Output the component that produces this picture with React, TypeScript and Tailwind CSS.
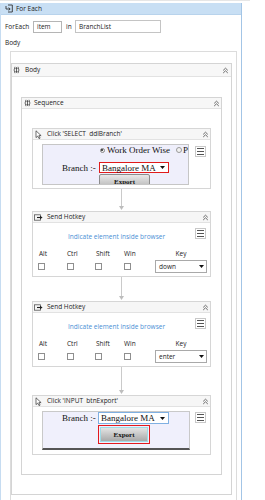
import React from "react";

const F = "font-['Open_Sans',sans-serif]";
const S = "font-['Liberation_Serif',serif]";

function Chev() {
  return (
    <svg width="7" height="7" viewBox="0 0 7 7" fill="none" stroke="#5a5a5a" strokeWidth="0.9">
      <path d="M1.2 3.4 L3.5 1.2 L5.8 3.4 M1.2 6 L3.5 3.8 L5.8 6" />
    </svg>
  );
}

function SeqIcon() {
  return (
    <svg width="7" height="8" viewBox="0 0 7 8" fill="none" stroke="#444" strokeWidth="0.8">
      <path d="M2 0.8 Q0.2 4 2 7.2" />
      <path d="M5 0.8 Q6.8 4 5 7.2" />
      <path d="M3.5 1.5 V6.5" />
      <path d="M2.5 2.6 L3.5 1.4 L4.5 2.6 Z M2.5 5.4 L3.5 6.6 L4.5 5.4 Z" fill="#444" strokeWidth="0.4" />
    </svg>
  );
}

function ForEachIcon() {
  return (
    <svg width="8" height="9" viewBox="0 0 8 9" fill="none" stroke="#333" strokeWidth="0.9">
      <path d="M3 1 H7.3 V8 H3" />
      <path d="M1 2 V5 H5" />
      <path d="M3.6 3.6 L5.2 5 L3.6 6.4" />
    </svg>
  );
}

function CursorIcon() {
  return (
    <svg width="7" height="9" viewBox="0 0 7 9">
      <path d="M1 0.8 L1 7.6 L2.7 6.1 L4 8.6 L5.1 8.1 L3.9 5.6 L6.1 5.6 Z" fill="#fff" stroke="#333" strokeWidth="0.7" strokeLinejoin="round" />
    </svg>
  );
}

function HotkeyIcon() {
  return (
    <svg width="9" height="7" viewBox="0 0 9 7" fill="none">
      <rect x="0.5" y="0.8" width="6" height="5.4" stroke="#555" strokeWidth="0.8" />
      <path d="M3 3.5 H6.5" stroke="#222" strokeWidth="1.1" />
      <path d="M6 1.8 L8.6 3.5 L6 5.2 Z" fill="#222" />
    </svg>
  );
}

function Hamburger() {
  return (
    <div className="w-[11px] h-[11px] border border-[#c8c8c8] bg-white flex flex-col items-center justify-center gap-[2px]">
      <div className="w-[7px] h-[1px] bg-[#555]" />
      <div className="w-[7px] h-[1px] bg-[#555]" />
      <div className="w-[7px] h-[1px] bg-[#555]" />
    </div>
  );
}

function DownTri() {
  return (
    <svg width="5" height="3" viewBox="0 0 5 3">
      <path d="M0 0 H5 L2.5 3 Z" fill="#111" />
    </svg>
  );
}

function ActHeader({ icon, title }: { icon: React.ReactNode; title: string }) {
  return (
    <div className={`h-[11px] flex items-center bg-[#f6f6f6] border-b border-[#e2e2e2] pr-[1px] text-[6.5px] leading-[8px] text-[#222] ${F}`}>
      {icon}
      <span className="whitespace-pre">{title}</span>
      <div className="flex-1" />
      <Chev />
    </div>
  );
}

function Connector({ cls }: { cls: string }) {
  return (
    <div className={`flex flex-col items-center ${cls}`}>
      <div className="flex-1 w-[1px] bg-[#cacaca]" />
      <svg width="5" height="4" viewBox="0 0 5 4">
        <path d="M0 0 H5 L2.5 4 Z" fill="#bdbdbd" />
      </svg>
      <div className="h-[1px]" />
    </div>
  );
}

function Check() {
  return <div className="w-[7px] h-[7px] border border-[#8f8f8f] bg-white" />;
}

function SendHotkey({ k }: { k: string }) {
  return (
    <div className="w-[179px] border border-[#d6d6d6] bg-white">
      <ActHeader
        icon={
          <div className="ml-[1px] mr-[4px] flex items-center">
            <HotkeyIcon />
          </div>
        }
        title="Send Hotkey"
      />
      <div className={`text-[6.5px] leading-[8px] text-[#222] ${F}`}>
        <div className="h-[26px] flex items-start">
          <div className="flex-1 pl-[35px] pt-[10px] text-[#4a8fd5] whitespace-nowrap">Indicate element inside browser</div>
          <div className="mt-[5px] mr-[4px]">
            <Hamburger />
          </div>
        </div>
        <div className="h-[9px] flex items-center pl-[5px]">
          <div className="w-[29px] pl-[1px]">Alt</div>
          <div className="w-[28px]">Ctrl</div>
          <div className="w-[29px] pl-[1px]">Shift</div>
          <div className="w-[28px]">Win</div>
          <div className="ml-[3px] w-[52px] text-center">Key</div>
        </div>
        <div className="mt-[2px] h-[13px] flex items-center pl-[5px]">
          <div className="w-[29px]"><Check /></div>
          <div className="w-[28px]"><Check /></div>
          <div className="w-[29px]"><Check /></div>
          <div className="w-[28px]"><Check /></div>
          <div className="ml-[3px] w-[52px] h-[13px] border border-[#a9a9a9] bg-white flex items-center pl-[3px] pr-[2px]">
            <span>{k}</span>
            <div className="flex-1" />
            <DownTri />
          </div>
        </div>
        <div className="h-[3px]" />
      </div>
    </div>
  );
}

function ClickSelect() {
  return (
    <div className="w-[179px] border border-[#d6d6d6] bg-white">
      <ActHeader
        icon={
          <div className="ml-[2px] mr-[5px] flex items-center">
            <CursorIcon />
          </div>
        }
        title="Click 'SELECT  ddlBranch'"
      />
      <div className="flex items-start pt-[4px] pb-[3px]">
        <div className={`ml-[9px] w-[147px] h-[41px] border border-[#c6c6c6] bg-[#efeffb] overflow-hidden text-[#111] ${S}`}>
          <div className="h-[10px] flex items-center pl-[57px] whitespace-nowrap text-[9px] leading-[10px]">
            <div className="w-[5px] h-[5px] rounded-full border border-[#888] bg-[#eee] flex items-center justify-center">
              <div className="w-[2px] h-[2px] rounded-full bg-[#222]" />
            </div>
            <span className="ml-[2px]">Work Order Wise</span>
            <div className="ml-[6px] w-[6px] h-[6px] rounded-full border border-[#999] bg-[#f2f2f2]" />
            <span className="ml-[1px]">P</span>
          </div>
          <div className="mt-[7px] h-[11px] flex items-center pl-[19px] text-[9px] leading-[10px] whitespace-nowrap">
            <span className="w-[37px]">Branch :-</span>
            <div className="w-[70px] h-[11px] border border-[#e01b1b] bg-white flex items-center pl-[2px] pr-[3px]">
              <span>Bangalore MA</span>
              <div className="flex-1" />
              <DownTri />
            </div>
          </div>
          <div className="mt-[1px] pl-[56px]">
            <div className="w-[51px] h-[14px] rounded-t-[2px] border border-[#8c8c8c] bg-gradient-to-b from-[#e9e9e9] to-[#b8b8b8] flex justify-center pt-[3px] text-[7px] leading-[8px] font-bold">
              Export
            </div>
          </div>
        </div>
        <div className="flex-1" />
        <div className="mt-[2px] mr-[4px]">
          <Hamburger />
        </div>
      </div>
    </div>
  );
}

function ClickInput() {
  return (
    <div className="w-[179px] border border-[#d6d6d6] bg-white">
      <ActHeader
        icon={
          <div className="ml-[2px] mr-[5px] flex items-center">
            <CursorIcon />
          </div>
        }
        title="Click 'INPUT  btnExport'"
      />
      <div className="flex items-start pt-[4px] pb-[4px]">
        <div className={`ml-[9px] w-[148px] h-[39px] border-x border-t border-[#c9c9c9] border-b-2 border-b-[#555] bg-[#f0f0fc] overflow-hidden text-[#111] ${S}`}>
          <div className="h-[12px] flex items-center pl-[19px] text-[9px] leading-[10px] whitespace-nowrap">
            <span className="w-[36px]">Branch :-</span>
            <div className="w-[71px] h-[12px] border border-[#7fb0e2] bg-white flex items-center pl-[2px] pr-[3px]">
              <span>Bangalore MA</span>
              <div className="flex-1" />
              <DownTri />
            </div>
          </div>
          <div className="mt-[1px] pl-[55px]">
            <div className="w-[52px] h-[19px] border-[1.5px] border-[#e3191e] p-[1px]">
              <div className="w-full h-full border border-[#9fdbe6] bg-gradient-to-b from-[#e4e4e4] to-[#a9a9a9] flex items-center justify-center text-[7px] leading-[8px] font-bold">
                Export
              </div>
            </div>
          </div>
        </div>
        <div className="flex-1" />
        <div className="mt-[1px] mr-[4px]">
          <Hamburger />
        </div>
      </div>
    </div>
  );
}

export default function App() {
  return (
    <div className={`w-[265px] h-[500px] overflow-hidden bg-white ${F}`}>
      <div className="h-[1px] w-[250px] bg-[#e6e6e6]" />
      <div className="h-[2px]" />
      <div className="w-[242px] h-[497px] border-l border-r border-l-[#c6dcf1] border-r-[#a3c5e6]">
        <div className="h-[12px] bg-[#c8dff4] flex items-center border-b border-[#b8d3ec]">
          <div className="ml-[4px] mr-[3px] flex items-center">
            <ForEachIcon />
          </div>
          <span className="text-[6.5px] leading-[8px] text-[#1a1a1a]">For Each</span>
        </div>
        <div className="mt-[5px] h-[13px] flex items-center pl-[4px] text-[6.5px] leading-[8px] text-[#222]">
          <span className="w-[28px]">ForEach</span>
          <div className="w-[29px] h-[12px] border border-[#b5b5b5] bg-white flex items-center pl-[3px]">item</div>
          <span className="ml-[4px] w-[9px]">in</span>
          <div className="w-[86px] h-[13px] border border-[#c4c4c4] bg-white flex items-center pl-[3px]">BranchList</div>
        </div>
        <div className="mt-[6px] pl-[4px] text-[6.5px] leading-[8px] text-[#222]">Body</div>
        <div className="mt-[4px] ml-[9px] w-[227px] h-[470px] border border-[#dcdcdc] pt-[11px]">
          <div className="w-[221px] border border-[#d4d4d4] bg-white">
            <div className="h-[13px] flex items-center bg-[#f7f7f7] border-b border-[#e2e2e2] pr-[2px] text-[6.5px] leading-[8px] text-[#222]">
              <div className="ml-[1px] mr-[5px] flex items-center">
                <SeqIcon />
              </div>
              <span>Body</span>
              <div className="flex-1" />
              <Chev />
            </div>
            <div className="pt-[20px] pb-[19px] pl-[9px]">
              <div className="w-[201px] border border-[#d4d4d4] bg-white">
                <div className="h-[11px] flex items-center bg-[#f7f7f7] border-b border-[#e2e2e2] pr-[1px] text-[6.5px] leading-[8px] text-[#222]">
                  <div className="ml-[2px] mr-[3px] flex items-center">
                    <SeqIcon />
                  </div>
                  <span>Sequence</span>
                  <div className="flex-1" />
                  <Chev />
                </div>
                <div className="pt-[19px] pb-[19px] pl-[10px] flex flex-col">
                  <ClickSelect />
                  <div className="w-[179px]"><Connector cls="h-[22px]" /></div>
                  <SendHotkey k="down" />
                  <div className="w-[179px]"><Connector cls="h-[24px]" /></div>
                  <SendHotkey k="enter" />
                  <div className="w-[179px]"><Connector cls="h-[28px]" /></div>
                  <ClickInput />
                </div>
              </div>
            </div>
          </div>
        </div>
      </div>
    </div>
  );
}
